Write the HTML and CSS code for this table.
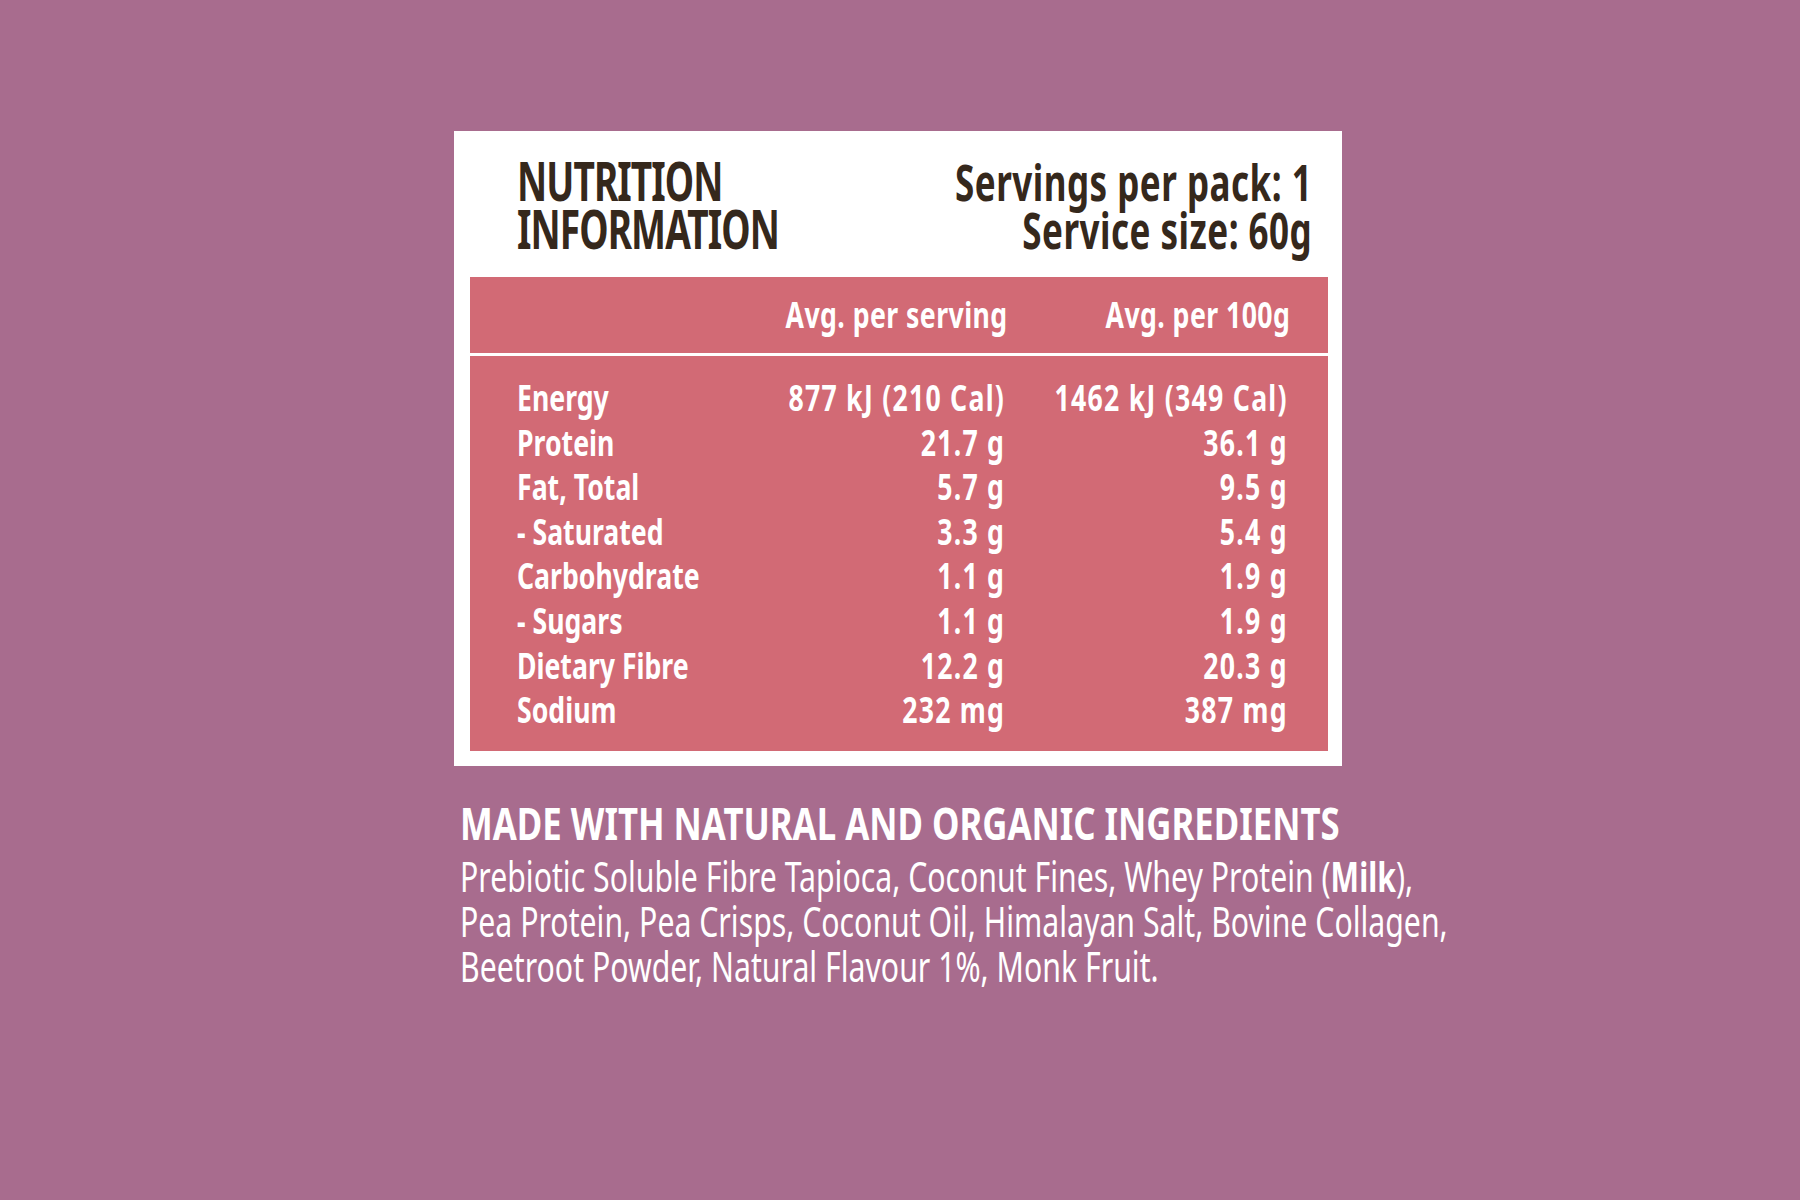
FILE: index.html
```html
<!DOCTYPE html>
<html lang="en">
<head>
<meta charset="utf-8">
<title>Nutrition Information</title>
<link rel="stylesheet" href="styles.css">
</head>
<body>
<main class="page">
  <section class="card">
    <header class="card-head">
      <div class="head-inner">
        <h1 class="title">NUTRITION<br>INFORMATION</h1>
        <p class="serving">Servings per pack: 1<br>Service size: 60g</p>
      </div>
    </header>
    <div class="table">
      <div class="head-row">
        <div class="grid">
          <span></span>
          <span class="num">Avg. per serving</span>
          <span class="num">Avg. per 100g</span>
        </div>
      </div>
      <div class="body-rows">
        <div class="grid">
          <span>Energy</span><span class="num">877 kJ (210 Cal)</span><span class="num">1462 kJ (349 Cal)</span>
          <span>Protein</span><span class="num">21.7 g</span><span class="num">36.1 g</span>
          <span>Fat, Total</span><span class="num">5.7 g</span><span class="num">9.5 g</span>
          <span>- Saturated</span><span class="num">3.3 g</span><span class="num">5.4 g</span>
          <span>Carbohydrate</span><span class="num">1.1 g</span><span class="num">1.9 g</span>
          <span>- Sugars</span><span class="num">1.1 g</span><span class="num">1.9 g</span>
          <span>Dietary Fibre</span><span class="num">12.2 g</span><span class="num">20.3 g</span>
          <span>Sodium</span><span class="num">232 mg</span><span class="num">387 mg</span>
        </div>
      </div>
    </div>
  </section>
  <section class="ingredients">
    <h2 class="ing-title">MADE WITH NATURAL AND ORGANIC INGREDIENTS</h2>
    <p class="ing-text">Prebiotic Soluble Fibre Tapioca, Coconut Fines, Whey Protein (<b>Milk</b>),<br>Pea Protein, Pea Crisps, Coconut Oil, Himalayan Salt, Bovine Collagen,<br>Beetroot Powder, Natural Flavour 1%, Monk Fruit.</p>
  </section>
</main>
</body>
</html>
```
FILE: styles.css
```css
html, body {
  margin: 0;
  padding: 0;
}
body {
  background: #a86c8e;
  width: 1800px;
  height: 1200px;
  overflow: hidden;
  font-family: "Noto Sans", "Open Sans", "DejaVu Sans", sans-serif;
}
.page {
  padding: 131px 0 0 454px;
}
.card {
  width: 888px;
  height: 635px;
  box-sizing: border-box;
  background: #ffffff;
  display: flex;
  flex-direction: column;
  padding: 26px 14px 15px 16px;
}
.card-head {
  padding: 0 0 0 47px;
  height: 120px;
}
.head-inner {
  display: flex;
  justify-content: space-between;
  align-items: flex-start;
  width: 1136px;
  transform: scaleX(0.7);
  transform-origin: left top;
  white-space: nowrap;
  color: #35281c;
  font-weight: 700;
}
.title {
  margin: 0;
  font-size: 53px;
  line-height: 48px;
  font-weight: 700;
  letter-spacing: -1.3px;
}
.serving {
  margin: 0;
  padding-top: 1px;
  text-align: right;
  font-size: 50px;
  line-height: 48px;
  letter-spacing: 0.7px;
}
.table {
  flex: 1;
  display: flex;
  flex-direction: column;
  gap: 3px;
}
.grid {
  display: grid;
  grid-template-columns: 358px 300px 382px;
  width: 1040px;
  transform: scaleX(0.74);
  transform-origin: left top;
  font-size: 36px;
  line-height: 44.6px;
  font-weight: 700;
  color: #ffffff;
  white-space: nowrap;
}
.num {
  text-align: right;
}
.head-row {
  background: #d26a75;
  height: 76px;
  box-sizing: border-box;
  padding: 16px 0 0 47px;
}
.head-row .num {
  letter-spacing: 0.6px;
  margin-right: -5px;
}
.body-rows {
  flex: 1;
  background: #d26a75;
  padding: 20px 0 0 47px;
}
.body-rows .num {
  letter-spacing: 1.7px;
  margin-right: -1.7px;
}
.ingredients {
  padding: 33px 0 0 6px;
  color: #ffffff;
  white-space: nowrap;
}
.ing-title {
  margin: 0;
  font-size: 44px;
  line-height: 48px;
  font-weight: 700;
  transform: scaleX(0.79);
  transform-origin: left top;
}
.ing-text {
  margin: 6px 0 0;
  font-size: 42px;
  line-height: 45px;
  font-weight: 400;
  transform: scaleX(0.72);
  transform-origin: left top;
}
.ing-text b {
  font-weight: 700;
}
```
